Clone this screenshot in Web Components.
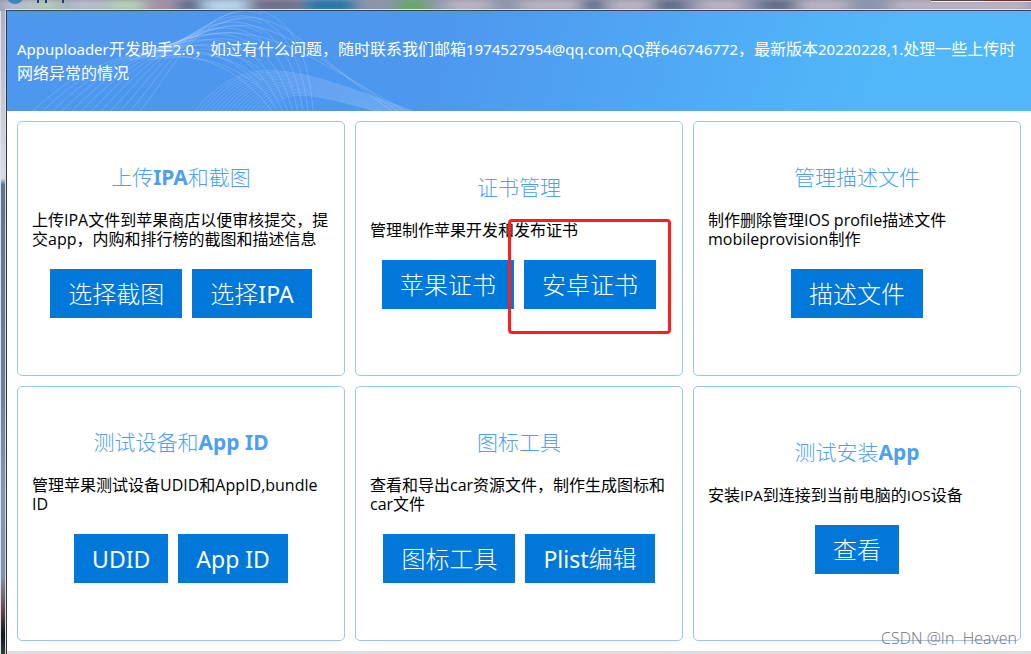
<!DOCTYPE html>
<html lang="zh-CN">
<head>
<meta charset="utf-8">
<title>Appuploader</title>
<style>
  body { margin: 0; font-family: "Noto Sans", "Noto Sans CJK SC", sans-serif; }
  /* Latin runs are set one pixel smaller than the Chinese around them. */
  [lang="en"] { font-size: 15px; line-height: 1; }
  [slot="title"] b { font-weight: 700; }
  action-button [lang="en"] { font-weight: 400; font-size: 23px; }
</style>
</head>
<body>
<app-window>
  <app-banner slot="banner"><span lang="en">Appuploader</span>开发助手<span lang="en">2.0</span>，如过有什么问题，随时联系我们邮箱<span lang="en">1974527954@qq.com,QQ</span>群<span lang="en">646746772</span>，最新版本<span lang="en">20220228,1.</span>处理一些上传时<wbr>网络异常的情况</app-banner>
  <tool-card>
    <span slot="title">上传<b>IPA</b>和截图</span>
    上传IPA文件到苹果商店以便审核提交，提交app，内购和排行榜的截图和描述信息
    <action-button slot="actions">选择截图</action-button>
    <action-button slot="actions">选择<span lang="en">IPA</span></action-button>
  </tool-card>
  <tool-card>
    <span slot="title">证书管理</span>
    管理制作苹果开发和发布证书
    <action-button slot="actions">苹果证书</action-button>
    <action-button slot="actions" marked>安卓证书</action-button>
  </tool-card>
  <tool-card>
    <span slot="title">管理描述文件</span>
    制作删除管理IOS profile描述文件mobileprovision制作
    <action-button slot="actions">描述文件</action-button>
  </tool-card>
  <tool-card>
    <span slot="title">测试设备和<b>App ID</b></span>
    管理苹果测试设备UDID和AppID,bundle ID
    <action-button slot="actions"><span lang="en">UDID</span></action-button>
    <action-button slot="actions"><span lang="en">App ID</span></action-button>
  </tool-card>
  <tool-card>
    <span slot="title">图标工具</span>
    查看和导出car资源文件，制作生成图标和car文件
    <action-button slot="actions">图标工具</action-button>
    <action-button slot="actions"><span lang="en">Plist</span>编辑</action-button>
  </tool-card>
  <tool-card>
    <span slot="title">测试安装<b>App</b></span>
    安装<span lang="en">IPA</span>到连接到当前电脑的<span lang="en">IOS</span>设备
    <action-button slot="actions">查看</action-button>
  </tool-card>
  <span slot="mark">CSDN @In&nbsp; Heaven</span>
</app-window>

<script>
class BaseElement extends HTMLElement {
  constructor() {
    super();
    this.attachShadow({ mode: 'open' }).innerHTML = this.constructor.markup;
  }
}

class AppWindow extends BaseElement {
  static markup = `
    <style>
      :host { display: grid; grid-template: 11px 1fr / 7px 1fr; min-height: 100vh; position: relative; overflow: hidden; }
      .top { grid-column: 1 / -1; display: block; width: 100%; height: 11px; }
      .side { background: linear-gradient(90deg, #dfe3ea 1px, transparent 1px 5px, #d5d9e0 5px 6px, #33373f 6px),
        linear-gradient(#a9b1c4 0, #c5cad6 15%, #d9dde6 26%, #5f7390 27%, #6c7fa0 60%, #8198b4 75%, #7d93ad 88%, #6b4a4a 93%, #15171c 97%, #2a3d34 100%); }
      .client { background: #fff; display: flex; flex-direction: column; border-bottom: 3px solid #ddd; min-width: 0; }
      main { flex: 1; display: grid; grid-template-columns: repeat(3, minmax(0, 1fr)); grid-auto-rows: 1fr; gap: 10px; padding: 10px; }
      .mark { position: absolute; right: 14px; bottom: 6px; font-family: "Open Sans", sans-serif; font-size: 16px; line-height: 20px; font-weight: 300; color: #707070; }
    </style>
    <svg class="top" viewBox="0 0 1031 11" preserveAspectRatio="none" aria-hidden="true">
      <defs><filter id="soft" x="-5%" y="-100%" width="110%" height="300%"><feGaussianBlur stdDeviation="8 2"/></filter></defs>
      <rect width="1031" height="11" fill="#8d95ac"/>
      <g filter="url(#soft)">
        <path fill="#b8bccb" d="M0 0h38v11H0zM66 0h40v11H66z"/>
        <path fill="#b7cdb5" d="M36 0h24v11H36zM108 0h36v11h-36z"/>
        <path fill="#a78fa5" d="M145 0h32v11h-32z"/><path fill="#5e6c88" d="M178 0h24v11h-24z"/>
        <path fill="#b4d4ec" d="M203 0h44v11h-44z"/><path fill="#75708a" d="M250 0h50v11h-50z"/>
        <path fill="#2878aa" d="M304 0h50v11h-50z"/><path fill="#68a866" d="M397 0h30v11h-30z"/>
        <path fill="#b9b1bf" d="M445 0h46v11h-46zM520 0h60v11h-60zM610 0h40v11h-40zM700 0h42v11h-42zM800 0h48v11h-48zM890 0h141v11H890z"/>
        <path fill="#646f88" d="M582 0h20v11h-20zM655 0h30v11h-30zM760 0h34v11h-34z"/>
      </g>
      <ellipse cx="15" cy="-3" rx="8" ry="7" fill="#3c86bd"/>
      <path fill="#203a80" d="M37 0h2v3h-2zM45 0h2v3h-2zM62 0h2v3h-2z"/>
      <path fill="#5a4650" d="M931 0h53v1h-53z"/><path fill="#7c2825" d="M984 0h47v1h-47z"/>
      <path fill="#eee" d="M931 1h100v1H931z"/>
      <path fill="#dfe2e8" d="M5 9h1026v1H5z"/><path fill="#3d4450" d="M6 10h1025v1H6z"/>
    </svg>
    <div class="side"></div>
    <div class="client">
      <slot name="banner"></slot>
      <main><slot></slot></main>
    </div>
    <div class="mark"><slot name="mark"></slot></div>`;
}

class AppBanner extends BaseElement {
  static markup = `
    <style>
      :host { display: block; position: relative; min-height: 100px; box-sizing: border-box; padding: 26px 10px; overflow: hidden;
        background: linear-gradient(105deg, #4e97ef 0 42%, #51b7f9 84%); color: #fff; font-size: 16px; line-height: 24px; }
      svg { position: absolute; left: 0; top: 0; width: 424px; height: 100px; fill: none; stroke: #fff; }
      p { position: relative; margin: 0; }
    </style>
    <svg viewBox="7 11 424 100" aria-hidden="true"></svg>
    <p><slot></slot></p>`;
  constructor() {
    super();
    // Each family blends evenly between two cubic curves.
    const families = [
      { n: 12, a: [33,111, 85,62, 115,60, 170,45], b: [140,111, 165,80, 175,55, 205,30], o: .16 },
      { n: 9, a: [170,48, 215,20, 235,4, 262,14], b: [150,60, 190,52, 230,60, 262,90], o: .14 },
      { n: 9, a: [190,40, 240,-10, 305,-5, 313,111], b: [130,60, 200,45, 240,70, 272,111], o: .16 },
      { n: 3, a: [200,34, 275,-10, 290,40, 392,111], b: [190,38, 260,20, 300,50, 405,111], o: .16 },
      { n: 18, a: [195,111, 245,50, 290,65, 413,111], b: [268,111, 285,90, 300,90, 375,111], o: .14 }
    ];
    let out = '';
    for (const f of families) {
      for (let i = 0; i < f.n; i++) {
        const t = i / (f.n - 1);
        const p = f.a.map((v, k) => (v + (f.b[k] - v) * t).toFixed(1));
        out += `<path stroke-opacity="${f.o}" d="M${p[0]} ${p[1]}C${p.slice(2).join(' ')}"/>`;
      }
    }
    this.shadowRoot.querySelector('svg').innerHTML = out;
  }
}

class ToolCard extends BaseElement {
  static markup = `
    <style>
      :host { display: flex; flex-direction: column; justify-content: center; box-sizing: border-box; min-height: 255px;
        padding: 0 14px 16px; border: 1px solid #95c6f6; border-radius: 5px; background: #fff; }
      h2 { margin: 0 0 20px; text-align: center; font-size: 21px; line-height: 28px; font-weight: 300; color: #4e9ff2; }
      p { margin: 0 0 20px; font-family: "Open Sans", "Noto Sans CJK SC", sans-serif; font-size: 16px; line-height: 19px; color: #000; }
      .actions { display: flex; flex-wrap: wrap; justify-content: center; gap: 10px; }
    </style>
    <h2><slot name="title"></slot></h2>
    <p><slot></slot></p>
    <div class="actions"><slot name="actions"></slot></div>`;
}

class ActionButton extends BaseElement {
  static markup = `
    <style>
      :host { display: block; position: relative; }
      button { display: block; border: 0; margin: 0; padding: 8px 18px; background: #0078d9; color: #fff;
        font-family: inherit; font-size: 24px; line-height: 33px; font-weight: 300; white-space: nowrap; }
      :host([marked])::after { content: ""; position: absolute; inset: -41px -15px -25px -16px; border: 3px solid #ff2015;
        border-radius: 4px; pointer-events: none; }
    </style>
    <button type="button"><slot></slot></button>`;
}

customElements.define('app-window', AppWindow);
customElements.define('app-banner', AppBanner);
customElements.define('tool-card', ToolCard);
customElements.define('action-button', ActionButton);
</script>
</body>
</html>
